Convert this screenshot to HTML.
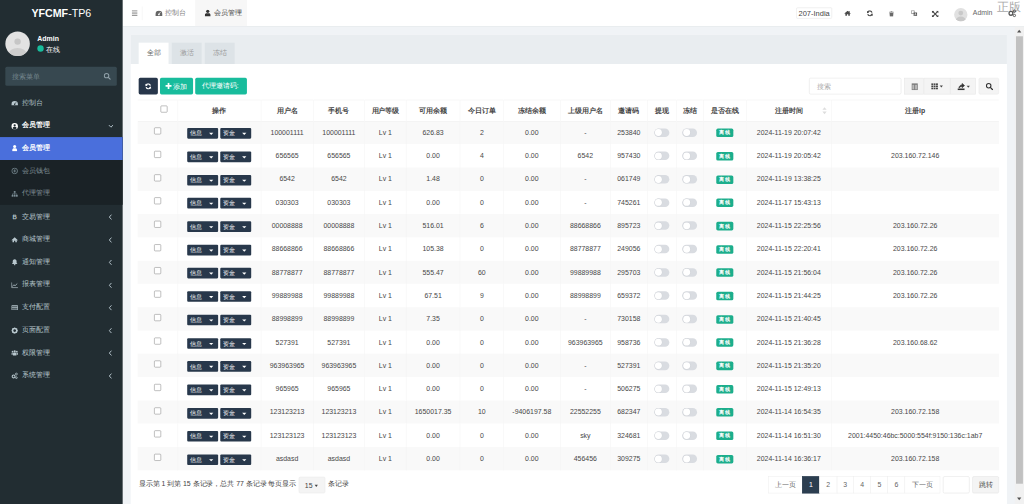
<!DOCTYPE html><html><head><meta charset="utf-8"><style>html,body{margin:0;padding:0;width:1024px;height:504px;overflow:hidden;background:#fff}
#app{will-change:opacity;opacity:0.999;position:absolute;left:0;top:0;width:1920px;height:945px;transform:scale(0.533333);transform-origin:0 0;font-family:"Liberation Sans",sans-serif;font-size:14px;color:#333;overflow:hidden}
.side{position:absolute;left:0;top:0;width:230px;z-index:2;height:945px;background:#222d32;color:#b8c7ce}
.logo{position:absolute;left:0;top:0;width:230px;height:50px;line-height:50px;text-align:center;color:#fff;font-size:20px}
.logo b{font-weight:bold}
.avatar{position:absolute;left:10px;top:59px;width:46px;height:46px;border-radius:50%;background:#e2e2e2;overflow:hidden}
.uname{position:absolute;left:70px;top:64.5px;color:#fff;font-weight:bold;font-size:13px}
.ustat{position:absolute;left:70px;top:84px;color:#fff;font-size:14px}
.ustat i{display:inline-block;width:12px;height:12px;border-radius:50%;background:#18bc9c;margin-right:4px;vertical-align:0}
.ssearch{position:absolute;left:10px;top:125px;width:209px;height:36px;background:#374850;border-radius:3px}
.ssearch span{position:absolute;left:13px;top:10px;color:#74858d;font-size:13px}
.menu{position:absolute;left:0;top:172.75px;width:230px;height:600px}
.mi{position:absolute;left:0;width:230px;height:42.5px;line-height:42.5px;color:#b8c7ce;font-size:13px}
.mi .ic{position:absolute;left:21px;top:14.25px;width:13px;height:13px}
.mi .tx{position:absolute;left:42px;top:-1.2px}
.mi .chev{position:absolute;left:203px;top:15.25px}
.mi.open{color:#fff;font-weight:bold}
.sub{position:absolute;left:0;width:230px;height:127px;background:#1a2226}
.sub .mi{color:#7f8d94}
.sub .mi.act{background:#4a6fdc;color:#fff;font-weight:bold;height:43px;line-height:43px}
.hdr{position:absolute;left:230px;top:0;width:1690px;height:49px;background:#fff;border-bottom:2px solid #e3e7ea}
.content{position:absolute;left:230px;top:50px;width:1690px;height:895px;background:#f0f3f6}
.panel{position:absolute;left:15px;top:15px;width:1643px;height:900px;background:#fff}
.ph{position:absolute;left:0;top:0;width:100%;height:55px;background:#e9edf0}
.tab{position:absolute;top:15px;height:40px;line-height:40px;width:56px;text-align:center;font-size:13px;color:#999;background:#dde3e7}
.tab.act{background:#fff;color:#666}
.pb{position:absolute;left:0;top:55px;width:100%}
.tbl{position:absolute;left:13px;top:66.5px;border-collapse:collapse;table-layout:fixed;width:1613px}
.tbl th{height:39px;font-weight:bold;font-size:13px;text-align:center;color:#444;border-left:1px solid #f3f3f3;padding:0;vertical-align:middle}
.tbl td{height:43.7px;font-size:13px;text-align:center;color:#484848;border-left:1px solid #f3f3f3;padding:0;vertical-align:middle}
.tbl th:first-child,.tbl td:first-child{border-left:0}
.tbl tbody tr:nth-child(odd){background:#f9f9f9}
.chk{display:inline-block;position:relative;top:-1px;width:13px;height:13px;border:1px solid #888;border-radius:2px;background:#fff;box-sizing:border-box}
.db{display:inline-block;top:2px;width:58px;height:20px;line-height:20px;background:#28384b;color:#fff;font-size:11.5px;border-radius:2px;text-align:left;padding-left:5px;box-sizing:border-box;position:relative;margin:0 2px}
.car{position:absolute;right:9px;top:9px;width:0;height:0;border-left:4px solid transparent;border-right:4px solid transparent;border-top:4px solid #fff}
.sw{display:inline-block;width:28px;height:16px;border-radius:8px;background:#d9dce1;position:relative;vertical-align:middle}
.sw:after{content:"";position:absolute;left:1.5px;top:1.5px;width:13px;height:13px;border-radius:50%;background:#fff;box-shadow:0 0 0 0.8px #d0d3d8}
.badge{display:inline-block;position:relative;top:0.5px;height:16px;line-height:16px;padding:0 6px;background:#1cae8c;color:#fff;font-size:10px;font-weight:bold;border-radius:3px;vertical-align:middle}
.sb{position:absolute;left:1673px;top:0;width:17px;height:895px;background:#f1f1f1}
.sbthumb{position:absolute;left:2px;top:17.5px;width:13px;height:839px;background:#c1c1c1}
.sbup{position:absolute;left:4px;top:6px;width:0;height:0;border-left:4.5px solid transparent;border-right:4.5px solid transparent;border-bottom:5px solid #505050}
.sbdn{position:absolute;left:4px;top:883px;width:0;height:0;border-left:4.5px solid transparent;border-right:4.5px solid transparent;border-top:5px solid #505050}
.htab{position:absolute;top:0;height:49px;line-height:49px;font-size:13px;white-space:nowrap}
.lang{position:absolute;left:1263px;top:14px;width:67px;height:21px;line-height:21px;border:1px solid #e5e5e5;border-radius:2px;font-size:14px;color:#444;text-align:center;box-sizing:border-box;background:#fff}
.zb{position:absolute;left:1639px;top:-3px;font-size:23px;color:#a8a8a8;font-family:"Liberation Sans",sans-serif;font-weight:300;letter-spacing:0px;font-weight:normal}
.btn{position:absolute;top:26px;height:31px;line-height:31px;color:#fff;font-size:13px;border-radius:3px}
.sinput{position:absolute;left:1272px;top:26px;width:173px;height:31px;border:1px solid #e3e3e3;box-sizing:border-box;border-radius:3px;background:#fff}
.sinput span{position:absolute;left:14px;top:0;line-height:30px;font-size:13px;color:#aaa}
.bgrp{position:absolute;left:1450px;top:26px;width:135px;height:31px}
.gb{position:absolute;top:0;height:31px;background:#f4f4f4;border:1px solid #e8e8e8;box-sizing:border-box}
.ftxt{position:absolute;top:777.5px;line-height:20px;font-size:13px;color:#444;white-space:nowrap}
.psel{position:absolute;left:314.5px;top:773.6px;width:50.5px;height:31px;line-height:31px;background:#f4f4f4;border:1px solid #eaeaea;box-sizing:border-box;border-radius:3px;font-size:13px;color:#444;padding-left:11px}
.psel i{display:inline-block;width:0;height:0;border-left:3px solid transparent;border-right:3px solid transparent;border-top:4px solid #444;vertical-align:middle}
.pg{position:absolute;left:1196px;top:772.5px;height:32px;white-space:nowrap;font-size:0}
.pg span{position:absolute;top:0;display:block;height:32px;line-height:32px;text-align:center;font-size:13px;color:#666;background:#fff;border:1px solid #eee;box-sizing:border-box;margin-left:-1px}
.pg span.on{background:#2c3e50;color:#fff;border-color:#2c3e50}
.pin{position:absolute;left:1523px;top:772.5px;width:50px;height:32px;border:1px solid #e3e3e3;box-sizing:border-box;border-radius:3px;background:#fff}
.pgo{position:absolute;left:1578px;top:772.5px;width:50px;height:32px;line-height:32px;border:1px solid #e3e3e3;box-sizing:border-box;border-radius:3px;background:#f4f4f4;font-size:13px;color:#444;text-align:center}
.hchk{margin-left:24px}
.sorti{position:absolute;right:8px;top:13px;width:8px;height:14px}
.sorti:before{content:"";position:absolute;left:0;top:0;border-left:4px solid transparent;border-right:4px solid transparent;border-bottom:5px solid #ddd}
.sorti:after{content:"";position:absolute;left:0;top:8px;border-left:4px solid transparent;border-right:4px solid transparent;border-top:5px solid #ddd}
.tbl th.sort{position:relative}
.tbl thead tr{border-top:1px solid #f0f0f0}
.tbl tbody tr:first-child td{box-shadow:inset 0 1px 0 #efefef}
</style></head><body><div id="app">
<div class="side">
<div class="logo"><b>YFCMF</b>-TP6</div>
<div class="avatar"><div style="position:absolute;left:17px;top:13px;width:12px;height:12px;border-radius:50%;background:#c6c6c6"></div><div style="position:absolute;left:6px;top:31px;width:34px;height:24px;border-radius:50%;background:#cdcdcd"></div></div>
<div class="uname">Admin</div>
<div class="ustat"><i></i>在线</div>
<div class="ssearch"><span>搜索菜单</span><svg style="position:absolute;left:184px;top:11px" width="14" height="14" viewBox="0 0 14 14"><circle cx="5.8" cy="5.8" r="4.2" fill="none" stroke="#8fa0a8" stroke-width="1.9"/><path d="M8.8 8.8L12.5 12.5" stroke="#8fa0a8" stroke-width="2.2" stroke-linecap="round"/></svg></div>
<div class="menu">
<div class="mi" style="top:0"><svg class="ic" viewBox="0 0 16 16"><path d="M8 3A7.5 7.5 0 0 0 0.5 10.5V13H15.5V10.5A7.5 7.5 0 0 0 8 3Z" fill="#b8c7ce"/><circle cx="8" cy="10.5" r="1.7" fill="#222d32"/><path d="M8 10.5L11.5 5.5" stroke="#222d32" stroke-width="1.3"/></svg><span class="tx">控制台</span></div>
<div class="mi open" style="top:42.5px"><svg class="ic" viewBox="0 0 16 16"><circle cx="8" cy="8" r="7.5" fill="#fff"/><circle cx="8" cy="6.2" r="2.6" fill="#222d32"/><path d="M3.2 12.8C4 10.3 6 9.6 8 9.6S12 10.3 12.8 12.8A6.5 6.5 0 0 1 3.2 12.8Z" fill="#222d32"/></svg><span class="tx">会员管理</span><svg class="chev" style="top:18px" width="10" height="8" viewBox="0 0 10 8"><path d="M1 1.5L5 5.5L9 1.5" stroke="#b8c7ce" stroke-width="1.8" fill="none"/></svg></div>
<div class="sub" style="top:84px">
<div class="mi act" style="top:0"><svg class="ic" viewBox="0 0 16 16"><circle cx="8" cy="4.5" r="3.5" fill="#fff"/><path d="M2.5 15.5V12.5C2.5 10 4.5 8.8 6 8.8H10C11.5 8.8 13.5 10 13.5 12.5V15.5Z" fill="#fff"/></svg><span class="tx">会员管理</span></div>
<div class="mi" style="top:43px"><svg class="ic" viewBox="0 0 16 16"><circle cx="8" cy="8" r="6.5" fill="none" stroke="#7d8f97" stroke-width="1.8"/><path d="M8 4.5V11.5M5.5 6.5H10.5M5.5 9H10.5" stroke="#7d8f97" stroke-width="1.4"/></svg><span class="tx">会员钱包</span></div>
<div class="mi" style="top:85.5px"><svg class="ic" viewBox="0 0 16 16"><rect x="6" y="1.5" width="4" height="4" fill="#7d8f97"/><path d="M8 5.5V8M3 11V8H13V11M8 8V11" stroke="#7d8f97" stroke-width="1.3" fill="none"/><rect x="1" y="10.5" width="4" height="4" fill="#7d8f97"/><rect x="6" y="10.5" width="4" height="4" fill="#7d8f97"/><rect x="11" y="10.5" width="4" height="4" fill="#7d8f97"/></svg><span class="tx">代理管理</span></div>
</div>
<div class="mi" style="top:213px"><svg class="ic" viewBox="0 0 16 16"><text x="8" y="13.5" text-anchor="middle" font-family="Liberation Sans" font-weight="bold" font-size="14" fill="#b8c7ce">B</text><path d="M6 1.5V3.5M9 1.5V3.5M6 12.5V14.5M9 12.5V14.5" stroke="#b8c7ce" stroke-width="1.2"/></svg><span class="tx">交易管理</span><svg class="chev" width="8" height="12" viewBox="0 0 8 12"><path d="M6 1.5L2 6L6 10.5" stroke="#b8c7ce" stroke-width="1.8" fill="none"/></svg></div>
<div class="mi" style="top:255.5px"><svg class="ic" viewBox="0 0 16 16"><path d="M8 2.5L0.5 9L1.5 10L3 8.8V14H6.5V10.5H9.5V14H13V8.8L14.5 10L15.5 9Z" fill="#b8c7ce"/></svg><span class="tx">商城管理</span><svg class="chev" width="8" height="12" viewBox="0 0 8 12"><path d="M6 1.5L2 6L6 10.5" stroke="#b8c7ce" stroke-width="1.8" fill="none"/></svg></div>
<div class="mi" style="top:298px"><svg class="ic" viewBox="0 0 16 16"><path d="M8 1.5C5 1.5 3.5 4 3.5 6.5V10L1.5 12.5H14.5L12.5 10V6.5C12.5 4 11 1.5 8 1.5Z" fill="#b8c7ce"/><circle cx="8" cy="14" r="1.8" fill="#b8c7ce"/></svg><span class="tx">通知管理</span><svg class="chev" width="8" height="12" viewBox="0 0 8 12"><path d="M6 1.5L2 6L6 10.5" stroke="#b8c7ce" stroke-width="1.8" fill="none"/></svg></div>
<div class="mi" style="top:340.5px"><svg class="ic" viewBox="0 0 16 16"><path d="M1 2V14H15.5" stroke="#b8c7ce" stroke-width="1.6" fill="none"/><path d="M2.5 11.5L6 7.5L9 9.5L14 4.5" stroke="#b8c7ce" stroke-width="1.8" fill="none"/></svg><span class="tx">报表管理</span><svg class="chev" width="8" height="12" viewBox="0 0 8 12"><path d="M6 1.5L2 6L6 10.5" stroke="#b8c7ce" stroke-width="1.8" fill="none"/></svg></div>
<div class="mi" style="top:383px"><svg class="ic" viewBox="0 0 16 16"><rect x="0.5" y="3" width="15" height="11" rx="1" fill="#b8c7ce"/><rect x="1.8" y="5.5" width="12.4" height="2" fill="#222d32"/><rect x="1.8" y="10" width="12.4" height="2.6" fill="#222d32"/></svg><span class="tx">支付配置</span><svg class="chev" width="8" height="12" viewBox="0 0 8 12"><path d="M6 1.5L2 6L6 10.5" stroke="#b8c7ce" stroke-width="1.8" fill="none"/></svg></div>
<div class="mi" style="top:425.5px"><svg class="ic" viewBox="0 0 16 16"><circle cx="8" cy="8.5" r="5" fill="none" stroke="#b8c7ce" stroke-width="3.6"/><path d="M8 1.5V4M8 13V15.5M1 8.5H3.5M12.5 8.5H15M3 3.5L4.8 5.3M11.2 11.7L13 13.5M13 3.5L11.2 5.3M4.8 11.7L3 13.5" stroke="#b8c7ce" stroke-width="2.2"/></svg><span class="tx">页面配置</span><svg class="chev" width="8" height="12" viewBox="0 0 8 12"><path d="M6 1.5L2 6L6 10.5" stroke="#b8c7ce" stroke-width="1.8" fill="none"/></svg></div>
<div class="mi" style="top:468px"><svg class="ic" viewBox="0 0 16 16"><circle cx="8" cy="4.5" r="2.6" fill="#b8c7ce"/><circle cx="3" cy="5.5" r="2" fill="#b8c7ce"/><circle cx="13" cy="5.5" r="2" fill="#b8c7ce"/><path d="M4 14V10C4 8.5 5.5 7.5 7 7.5H9C10.5 7.5 12 8.5 12 10V14Z" fill="#b8c7ce"/><path d="M0.5 12.5V10C0.5 8.5 1.5 8 2.5 8H3.5V12.5ZM15.5 12.5V10C15.5 8.5 14.5 8 13.5 8H12.5V12.5Z" fill="#b8c7ce"/></svg><span class="tx">权限管理</span><svg class="chev" width="8" height="12" viewBox="0 0 8 12"><path d="M6 1.5L2 6L6 10.5" stroke="#b8c7ce" stroke-width="1.8" fill="none"/></svg></div>
<div class="mi" style="top:510.5px"><svg class="ic" viewBox="0 0 16 16"><circle cx="5.5" cy="9.5" r="3.3" fill="none" stroke="#b8c7ce" stroke-width="2.6"/><circle cx="12" cy="4" r="2.2" fill="none" stroke="#b8c7ce" stroke-width="1.8"/><circle cx="12" cy="12.5" r="2" fill="none" stroke="#b8c7ce" stroke-width="1.8"/></svg><span class="tx">系统管理</span><svg class="chev" width="8" height="12" viewBox="0 0 8 12"><path d="M6 1.5L2 6L6 10.5" stroke="#b8c7ce" stroke-width="1.8" fill="none"/></svg></div>
</div>
</div>

<div class="hdr">
<svg style="position:absolute;left:17px;top:19px" width="11" height="11" viewBox="0 0 11 11"><rect x="0" y="0" width="11" height="2.4" fill="#9a9a9a"/><rect x="0" y="4.3" width="11" height="2.4" fill="#9a9a9a"/><rect x="0" y="8.6" width="11" height="2.4" fill="#9a9a9a"/></svg>
<div style="position:absolute;left:36px;top:12px;width:1px;height:26px;background:#f0f0f0"></div>
<svg style="position:absolute;left:61px;top:19px" width="14" height="12" viewBox="0 0 14 12"><path d="M7 1A6.5 6.5 0 0 0 0.5 7.5V11H13.5V7.5A6.5 6.5 0 0 0 7 1Z" fill="#666"/><circle cx="7" cy="8" r="1.6" fill="#fff"/><path d="M7 8L10 3.5" stroke="#fff" stroke-width="1.2"/></svg>
<div class="htab" style="left:80px;color:#777">控制台</div>
<div style="position:absolute;left:136px;top:0;width:97px;height:49px;background:#f7f7f7"></div>
<svg style="position:absolute;left:154px;top:18px" width="11" height="13" viewBox="0 0 11 13"><circle cx="5.5" cy="3.2" r="3" fill="#333"/><path d="M0 13V10.2C0 8 2 6.8 3.5 6.8H7.5C9 6.8 11 8 11 10.2V13Z" fill="#333"/></svg>
<div class="htab" style="left:171px;color:#444">会员管理</div>
<div class="lang">207-India</div>
<svg style="position:absolute;left:1352.5px;top:20px" width="12.5" height="10" viewBox="0 0 14 11"><path d="M7 0.3L0.2 5.8L1.1 6.8L2.3 5.9V10.8H5.6V7.5H8.4V10.8H11.7V5.9L12.9 6.8L13.8 5.8L11.2 3.7V0.8H9.6V2.4Z" fill="#4a4a4a"/></svg>
<svg style="position:absolute;left:1395px;top:19.2px" width="12" height="12" viewBox="0 0 14 14"><path d="M11.6 5.4A4.9 4.9 0 0 0 2.6 4.1" stroke="#4a4a4a" stroke-width="2.6" fill="none"/><path d="M0.6 1.4L0.9 6.6L5.6 5.3Z" fill="#4a4a4a"/><path d="M2.4 8.6A4.9 4.9 0 0 0 11.4 9.9" stroke="#4a4a4a" stroke-width="2.6" fill="none"/><path d="M13.4 12.6L13.1 7.4L8.4 8.7Z" fill="#4a4a4a"/></svg>
<svg style="position:absolute;left:1437.3px;top:20.5px" width="9" height="10.5" viewBox="0 0 9 10.5"><rect x="0" y="1" width="9" height="1.6" rx="0.5" fill="#6a6a6a"/><rect x="3" y="0" width="3" height="1.6" fill="#6a6a6a"/><path d="M0.8 3.2H8.2L7.6 10.5H1.4Z" fill="#6a6a6a"/></svg>
<svg style="position:absolute;left:1477.5px;top:18.5px" width="12.5" height="12" viewBox="0 0 16 15"><path d="M1 1H8V8H1Z" fill="none" stroke="#888" stroke-width="1.8"/><path d="M6.5 5.5H15V14H6.5Z" fill="#555"/><path d="M8.8 12.8L10.75 7.2L12.7 12.8M9.4 11H12.1" stroke="#fff" stroke-width="1.1" fill="none"/></svg>
<svg style="position:absolute;left:1517px;top:19.5px" width="13" height="12.5" viewBox="0 0 14 14"><path d="M2 2L12 12M12 2L2 12" stroke="#444" stroke-width="2.4"/><path d="M0 0H5.5L0 5.5Z M14 0H8.5L14 5.5Z M0 14H5.5L0 8.5Z M14 14H8.5L14 8.5Z" fill="#444"/></svg>
<div style="position:absolute;left:1559px;top:15px;width:25px;height:25px;border-radius:50%;background:#e1e1e1;overflow:hidden"><div style="position:absolute;left:8px;top:5px;width:9px;height:9px;border-radius:50%;background:#c9c9c9"></div><div style="position:absolute;left:3px;top:16px;width:19px;height:14px;border-radius:50%;background:#c9c9c9"></div></div>
<div class="htab" style="left:1594px;color:#666;font-size:13px">Admin</div>
<div class="zb">正版</div>
<svg style="position:absolute;left:1660px;top:17px" width="16" height="16" viewBox="0 0 16 16"><circle cx="5.5" cy="8" r="3.6" fill="none" stroke="#555" stroke-width="2.4"/><circle cx="12" cy="4" r="2.2" fill="none" stroke="#555" stroke-width="1.8"/><circle cx="12" cy="12" r="2.2" fill="none" stroke="#555" stroke-width="1.8"/></svg>
</div>

<div class="content"><div class="panel"><div class="ph"><span class="tab act" style="left:15px">全部</span><span class="tab" style="left:77px">激活</span><span class="tab" style="left:139px">冻结</span></div><div class="pb">
<div class="btn" style="left:15px;width:36px;background:#27364a"><svg style="position:absolute;left:12px;top:9.5px" width="12" height="12" viewBox="0 0 14 14"><path d="M11.6 5.4A4.9 4.9 0 0 0 2.6 4.1" stroke="#fff" stroke-width="2.8" fill="none"/><path d="M0.6 1.4L0.9 6.6L5.6 5.3Z" fill="#fff"/><path d="M2.4 8.6A4.9 4.9 0 0 0 11.4 9.9" stroke="#fff" stroke-width="2.8" fill="none"/><path d="M13.4 12.6L13.1 7.4L8.4 8.7Z" fill="#fff"/></svg></div>
<div class="btn" style="left:55px;width:62px;background:#18bc9c"><svg style="position:absolute;left:10px;top:9px" width="12" height="12" viewBox="0 0 12 12"><path d="M4.4 0H7.6V4.4H12V7.6H7.6V12H4.4V7.6H0V4.4H4.4Z" fill="#fff"/></svg><span style="position:absolute;left:25px;top:0">添加</span></div>
<div class="btn" style="left:121px;width:97px;background:#18bc9c"><span style="position:absolute;left:13px;top:0;font-size:12.5px">代理邀请码:</span></div>
<div class="sinput"><span>搜索</span></div>
<div class="bgrp">
<div class="gb" style="left:0;width:37px"><svg style="position:absolute;left:12.5px;top:8.5px" width="12" height="13" viewBox="0 0 12 13"><rect x="0" y="0" width="12" height="13" fill="#7a7a7a"/><rect x="1.6" y="3" width="3.6" height="8.6" fill="#b9b9b9"/><rect x="6.8" y="3" width="3.6" height="8.6" fill="#b9b9b9"/></svg></div>
<div class="gb" style="left:37px;width:50px"><svg style="position:absolute;left:13px;top:9px" width="24" height="12" viewBox="0 0 24 12"><rect x="0" y="0" width="3.6" height="3.3" fill="#444"/><rect x="4.5" y="0" width="3.6" height="3.3" fill="#444"/><rect x="9" y="0" width="3.6" height="3.3" fill="#444"/><rect x="0" y="4.3" width="3.6" height="3.3" fill="#444"/><rect x="4.5" y="4.3" width="3.6" height="3.3" fill="#444"/><rect x="9" y="4.3" width="3.6" height="3.3" fill="#444"/><rect x="0" y="8.6" width="3.6" height="3.3" fill="#444"/><rect x="4.5" y="8.6" width="3.6" height="3.3" fill="#444"/><rect x="9" y="8.6" width="3.6" height="3.3" fill="#444"/><path d="M16 4.5H22L19 8Z" fill="#444"/></svg></div>
<div class="gb" style="left:87px;width:48px"><svg style="position:absolute;left:12px;top:8px" width="26" height="14" viewBox="0 0 26 14"><path d="M0.5 11H13.5V14H0.5Z" fill="#333"/><path d="M3 10C3.5 6 6 4.2 9 4.2V1.5L13.5 5.5L9 9.5V7C6.5 7 4.5 8 3 10Z" fill="#333" stroke="#333" stroke-width="1.2"/><path d="M17.5 6H23.5L20.5 9.5Z" fill="#444"/></svg></div>
</div>
<div class="gb" style="left:1589.5px;top:26px;width:38.5px;height:31px;border-radius:3px"><svg style="position:absolute;left:12px;top:8px" width="14" height="14" viewBox="0 0 14 14"><circle cx="5.8" cy="5.8" r="4.2" fill="none" stroke="#333" stroke-width="2"/><path d="M8.8 8.8L12.8 12.8" stroke="#333" stroke-width="2.4" stroke-linecap="round"/></svg></div>

<table class="tbl"><colgroup><col style="width:75.0px"><col style="width:156.6px"><col style="width:97.5px"><col style="width:96.7px"><col style="width:77.6px"><col style="width:101.3px"><col style="width:81.5px"><col style="width:106.0px"><col style="width:94.7px"><col style="width:68.4px"><col style="width:54.9px"><col style="width:50.1px"><col style="width:81.6px"><col style="width:158.4px"><col style="width:315.0px"></colgroup>
<thead><tr>
<th class="cb"><span class="chk hchk"></span></th>
<th>操作</th>
<th>用户名</th>
<th>手机号</th>
<th>用户等级</th>
<th>可用余额</th>
<th>今日订单</th>
<th>冻结余额</th>
<th>上级用户名</th>
<th>邀请码</th>
<th>提现</th>
<th>冻结</th>
<th>是否在线</th>
<th class="sort">注册时间<span class="sorti"></span></th>
<th>注册ip</th>
</tr></thead><tbody>
<tr>
<td class="cb"><span class="chk"></span></td>
<td class="ops"><span class="db">信息<i class="car"></i></span><span class="db">资金<i class="car"></i></span></td>
<td>100001111</td><td>100001111</td><td>Lv 1</td><td>626.83</td><td>2</td><td>0.00</td><td>-</td><td>253840</td>
<td><span class="sw"></span></td><td><span class="sw"></span></td><td><span class="badge">离线</span></td>
<td>2024-11-19 20:07:42</td><td></td>
</tr>
<tr>
<td class="cb"><span class="chk"></span></td>
<td class="ops"><span class="db">信息<i class="car"></i></span><span class="db">资金<i class="car"></i></span></td>
<td>656565</td><td>656565</td><td>Lv 1</td><td>0.00</td><td>4</td><td>0.00</td><td>6542</td><td>957430</td>
<td><span class="sw"></span></td><td><span class="sw"></span></td><td><span class="badge">离线</span></td>
<td>2024-11-19 20:05:42</td><td>203.160.72.146</td>
</tr>
<tr>
<td class="cb"><span class="chk"></span></td>
<td class="ops"><span class="db">信息<i class="car"></i></span><span class="db">资金<i class="car"></i></span></td>
<td>6542</td><td>6542</td><td>Lv 1</td><td>1.48</td><td>0</td><td>0.00</td><td>-</td><td>061749</td>
<td><span class="sw"></span></td><td><span class="sw"></span></td><td><span class="badge">离线</span></td>
<td>2024-11-19 13:38:25</td><td></td>
</tr>
<tr>
<td class="cb"><span class="chk"></span></td>
<td class="ops"><span class="db">信息<i class="car"></i></span><span class="db">资金<i class="car"></i></span></td>
<td>030303</td><td>030303</td><td>Lv 1</td><td>0.00</td><td>0</td><td>0.00</td><td>-</td><td>745261</td>
<td><span class="sw"></span></td><td><span class="sw"></span></td><td><span class="badge">离线</span></td>
<td>2024-11-17 15:43:13</td><td></td>
</tr>
<tr>
<td class="cb"><span class="chk"></span></td>
<td class="ops"><span class="db">信息<i class="car"></i></span><span class="db">资金<i class="car"></i></span></td>
<td>00008888</td><td>00008888</td><td>Lv 1</td><td>516.01</td><td>6</td><td>0.00</td><td>88668866</td><td>895723</td>
<td><span class="sw"></span></td><td><span class="sw"></span></td><td><span class="badge">离线</span></td>
<td>2024-11-15 22:25:56</td><td>203.160.72.26</td>
</tr>
<tr>
<td class="cb"><span class="chk"></span></td>
<td class="ops"><span class="db">信息<i class="car"></i></span><span class="db">资金<i class="car"></i></span></td>
<td>88668866</td><td>88668866</td><td>Lv 1</td><td>105.38</td><td>0</td><td>0.00</td><td>88778877</td><td>249056</td>
<td><span class="sw"></span></td><td><span class="sw"></span></td><td><span class="badge">离线</span></td>
<td>2024-11-15 22:20:41</td><td>203.160.72.26</td>
</tr>
<tr>
<td class="cb"><span class="chk"></span></td>
<td class="ops"><span class="db">信息<i class="car"></i></span><span class="db">资金<i class="car"></i></span></td>
<td>88778877</td><td>88778877</td><td>Lv 1</td><td>555.47</td><td>60</td><td>0.00</td><td>99889988</td><td>295703</td>
<td><span class="sw"></span></td><td><span class="sw"></span></td><td><span class="badge">离线</span></td>
<td>2024-11-15 21:56:04</td><td>203.160.72.26</td>
</tr>
<tr>
<td class="cb"><span class="chk"></span></td>
<td class="ops"><span class="db">信息<i class="car"></i></span><span class="db">资金<i class="car"></i></span></td>
<td>99889988</td><td>99889988</td><td>Lv 1</td><td>67.51</td><td>9</td><td>0.00</td><td>88998899</td><td>659372</td>
<td><span class="sw"></span></td><td><span class="sw"></span></td><td><span class="badge">离线</span></td>
<td>2024-11-15 21:44:25</td><td>203.160.72.26</td>
</tr>
<tr>
<td class="cb"><span class="chk"></span></td>
<td class="ops"><span class="db">信息<i class="car"></i></span><span class="db">资金<i class="car"></i></span></td>
<td>88998899</td><td>88998899</td><td>Lv 1</td><td>7.35</td><td>0</td><td>0.00</td><td>-</td><td>730158</td>
<td><span class="sw"></span></td><td><span class="sw"></span></td><td><span class="badge">离线</span></td>
<td>2024-11-15 21:40:45</td><td></td>
</tr>
<tr>
<td class="cb"><span class="chk"></span></td>
<td class="ops"><span class="db">信息<i class="car"></i></span><span class="db">资金<i class="car"></i></span></td>
<td>527391</td><td>527391</td><td>Lv 1</td><td>0.00</td><td>0</td><td>0.00</td><td>963963965</td><td>958736</td>
<td><span class="sw"></span></td><td><span class="sw"></span></td><td><span class="badge">离线</span></td>
<td>2024-11-15 21:36:28</td><td>203.160.68.62</td>
</tr>
<tr>
<td class="cb"><span class="chk"></span></td>
<td class="ops"><span class="db">信息<i class="car"></i></span><span class="db">资金<i class="car"></i></span></td>
<td>963963965</td><td>963963965</td><td>Lv 1</td><td>0.00</td><td>0</td><td>0.00</td><td>-</td><td>527391</td>
<td><span class="sw"></span></td><td><span class="sw"></span></td><td><span class="badge">离线</span></td>
<td>2024-11-15 21:35:20</td><td></td>
</tr>
<tr>
<td class="cb"><span class="chk"></span></td>
<td class="ops"><span class="db">信息<i class="car"></i></span><span class="db">资金<i class="car"></i></span></td>
<td>965965</td><td>965965</td><td>Lv 1</td><td>0.00</td><td>0</td><td>0.00</td><td>-</td><td>506275</td>
<td><span class="sw"></span></td><td><span class="sw"></span></td><td><span class="badge">离线</span></td>
<td>2024-11-15 12:49:13</td><td></td>
</tr>
<tr>
<td class="cb"><span class="chk"></span></td>
<td class="ops"><span class="db">信息<i class="car"></i></span><span class="db">资金<i class="car"></i></span></td>
<td>123123213</td><td>123123213</td><td>Lv 1</td><td>1650017.35</td><td>10</td><td>-9406197.58</td><td>22552255</td><td>682347</td>
<td><span class="sw"></span></td><td><span class="sw"></span></td><td><span class="badge">离线</span></td>
<td>2024-11-14 16:54:35</td><td>203.160.72.158</td>
</tr>
<tr>
<td class="cb"><span class="chk"></span></td>
<td class="ops"><span class="db">信息<i class="car"></i></span><span class="db">资金<i class="car"></i></span></td>
<td>123123123</td><td>123123123</td><td>Lv 1</td><td>0.00</td><td>0</td><td>0.00</td><td>sky</td><td>324681</td>
<td><span class="sw"></span></td><td><span class="sw"></span></td><td><span class="badge">离线</span></td>
<td>2024-11-14 16:51:30</td><td>2001:4450:46bc:5000:554f:9150:136c:1ab7</td>
</tr>
<tr>
<td class="cb"><span class="chk"></span></td>
<td class="ops"><span class="db">信息<i class="car"></i></span><span class="db">资金<i class="car"></i></span></td>
<td>asdasd</td><td>asdasd</td><td>Lv 1</td><td>0.00</td><td>0</td><td>0.00</td><td>456456</td><td>309275</td>
<td><span class="sw"></span></td><td><span class="sw"></span></td><td><span class="badge">离线</span></td>
<td>2024-11-14 16:36:17</td><td>203.160.72.158</td>
</tr>
</tbody></table>
<div class="ftxt" style="left:15px">显示第 1 到第 15 条记录，总共 77 条记录 每页显示</div>
<div class="psel">15 <i></i></div>
<div class="ftxt" style="left:370px">条记录</div>
<div class="pg"><span style="left:0.0px;width:65.0px">上一页</span><span class="on" style="left:64.0px;width:33.0px">1</span><span style="left:96.0px;width:33.5px">2</span><span style="left:128.5px;width:32.8px">3</span><span style="left:160.3px;width:33.0px">4</span><span style="left:192.3px;width:33.1px">5</span><span style="left:224.4px;width:33.0px">6</span><span style="left:256.4px;width:66.6px">下一页</span></div>
<div class="pin"></div>
<div class="pgo">跳转</div>

</div></div>
<div class="sb"><div class="sbup"></div><div class="sbthumb"></div><div class="sbdn"></div></div>
</div></div></body></html>
